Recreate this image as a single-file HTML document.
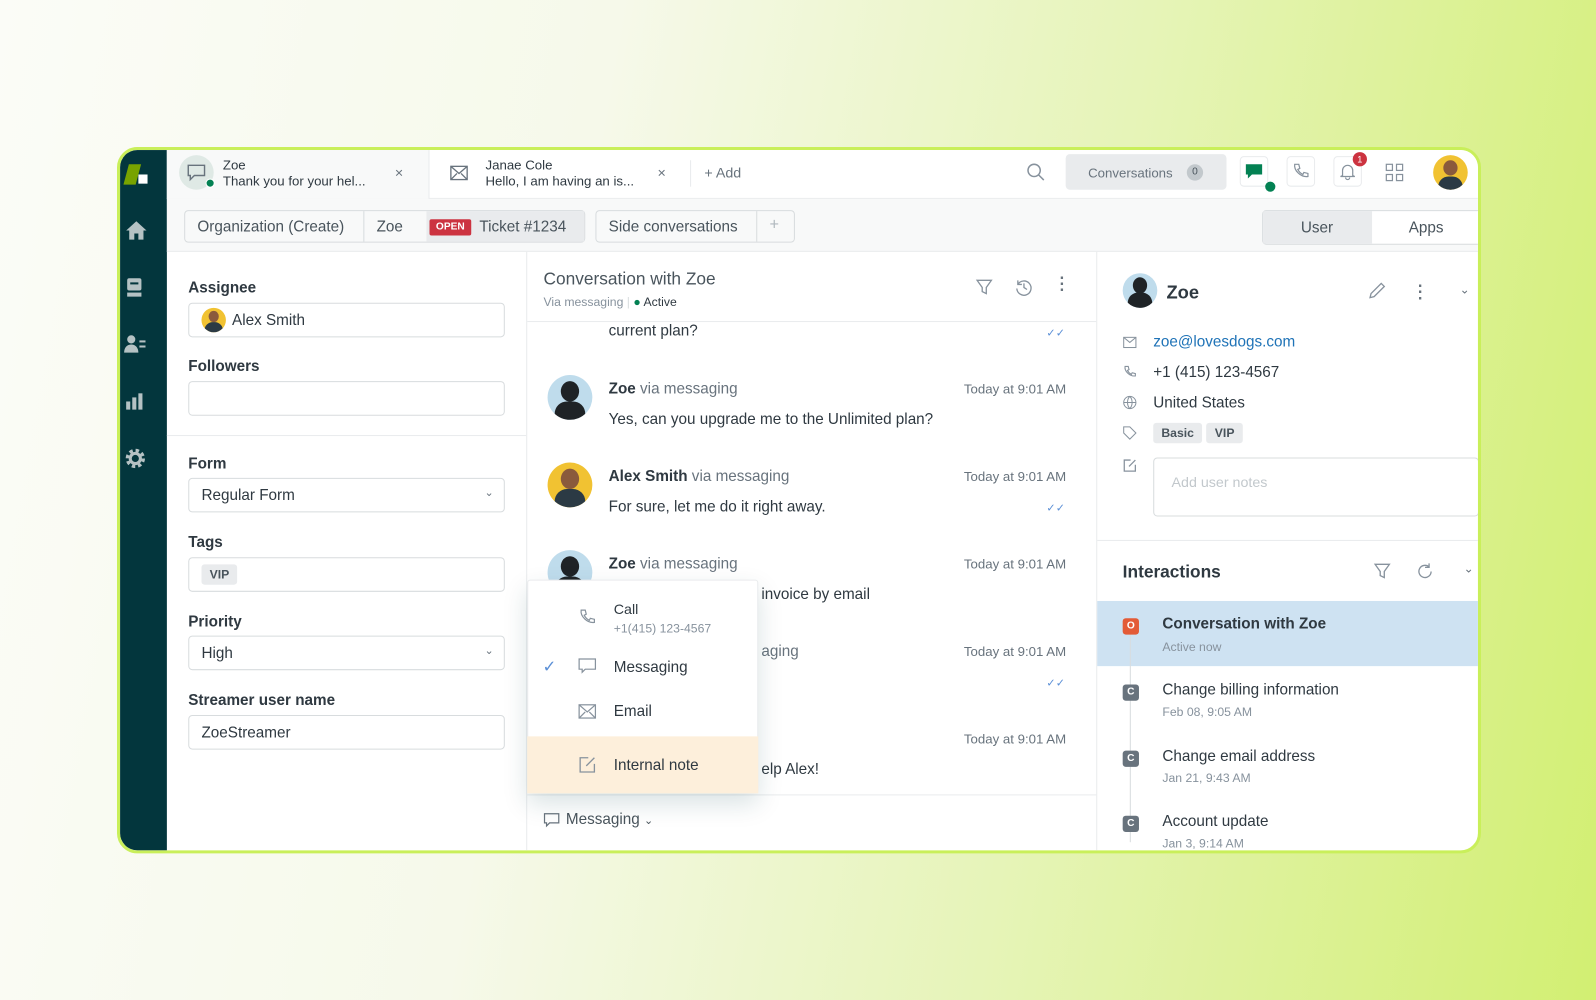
<!DOCTYPE html>
<html><head><meta charset="utf-8">
<style>
*{box-sizing:border-box;margin:0;padding:0}
body{width:1596px;height:1000px;overflow:hidden;font-family:"Liberation Sans",sans-serif;color:#2f3941;
background:linear-gradient(100deg,#fbfcf7 0%,#f6f9ea 35%,#e6f4b8 65%,#d2ef72 100%);position:relative}
.abs{position:absolute}
.frame{position:absolute;left:117px;top:147px;width:1340px;height:694px;border:3px solid #c9ef5a;border-radius:20px;background:#fff;overflow:hidden;transform:scale(1.0179);transform-origin:0 0}
.side{position:absolute;left:0;top:0;width:46px;height:100%;background:#03363d}
.t{position:absolute;white-space:nowrap}
.g{color:#68737d}
.box{position:absolute;border:1px solid #d8dcde;border-radius:4px;background:#fff}
.lbl{position:absolute;font-size:15px;font-weight:bold;color:#2f3941}
.ts{font-size:13px;color:#68737d}
.av{position:absolute;border-radius:50%;overflow:hidden}
.tag{display:inline-block;background:#e9ebed;border-radius:3px;font-size:12px;font-weight:bold;padding:3px 8px;color:#49545c}
</style></head><body>
<div class="frame">
 <div class="side">
  <div class="abs" style="left:6px;top:14px;width:12px;height:20px;background:#78a300;transform:skewX(-15deg)"></div>
  <div class="abs" style="left:18px;top:24px;width:9px;height:9px;background:#fff"></div>
  <svg class="abs" style="left:4px;top:68px" width="24" height="22" viewBox="0 0 24 22"><path d="M12 2L2 11h3v9h5v-6h4v6h5v-9h3z" fill="#b5c2c4"/></svg>
  <svg class="abs" style="left:5px;top:125px" width="18" height="20" viewBox="0 0 18 20"><rect x="2" y="1" width="14" height="12" rx="2" fill="#b5c2c4"/><rect x="2" y="15" width="14" height="4" fill="#b5c2c4"/><rect x="5" y="5" width="8" height="2" fill="#03363d"/></svg>
  <svg class="abs" style="left:3px;top:181px" width="24" height="20" viewBox="0 0 24 20"><circle cx="8" cy="5" r="4" fill="#b5c2c4"/><path d="M1 18c0-5 3-8 7-8s7 3 7 8z" fill="#b5c2c4"/><rect x="16" y="6" width="6" height="2" fill="#b5c2c4"/><rect x="16" y="11" width="6" height="2" fill="#b5c2c4"/></svg>
  <svg class="abs" style="left:5px;top:238px" width="18" height="18" viewBox="0 0 18 18"><rect x="1" y="9" width="4" height="8" fill="#b5c2c4"/><rect x="7" y="5" width="4" height="12" fill="#b5c2c4"/><rect x="13" y="1" width="4" height="16" fill="#b5c2c4"/></svg>
  <svg class="abs" style="left:4px;top:292px" width="22" height="22" viewBox="0 0 22 22"><circle cx="11" cy="11" r="7" fill="none" stroke="#b5c2c4" stroke-width="5" stroke-dasharray="3 2.5"/><circle cx="11" cy="11" r="5" fill="none" stroke="#b5c2c4" stroke-width="3"/></svg>
 </div>
 <div class="abs" style="left:46px;top:0;width:1294px;height:48px;background:#fff;border-bottom:1px solid #e9ebed"></div>
 <div class="abs" style="left:46px;top:0;width:258px;height:48px;background:#f8f9f9;border-right:1px solid #e9ebed"></div>
 <div class="av" style="left:58px;top:5px;width:34px;height:34px;background:#dfe9e5"></div>
 <svg class="abs" style="left:65px;top:13px" width="20" height="18" viewBox="0 0 20 18"><path d="M2 2h16v10H8l-4 4v-4H2z" fill="none" stroke="#68737d" stroke-width="1.4"/></svg>
 <div class="abs" style="left:84px;top:28px;width:9px;height:9px;border-radius:50%;background:#038153;border:1.5px solid #fff"></div>
 <div class="t" style="left:101px;top:7px;font-size:13px;line-height:16px">Zoe<br>Thank you for your hel...</div>
 <div class="t g" style="left:270px;top:14px;font-size:14px">×</div>
 <svg class="abs" style="left:324px;top:15px" width="18" height="15" viewBox="0 0 18 15"><rect x="1" y="1" width="16" height="13" fill="none" stroke="#68737d" stroke-width="1.3"/><path d="M1 1l8 7 8-7M1 14l6-6M17 14l-6-6" fill="none" stroke="#68737d" stroke-width="1.3"/></svg>
 <div class="t" style="left:359px;top:7px;font-size:13px;line-height:16px">Janae Cole<br>Hello, I am having an is...</div>
 <div class="t g" style="left:528px;top:14px;font-size:14px">×</div>
 <div class="abs" style="left:560px;top:10px;width:1px;height:26px;background:#e9ebed"></div>
 <div class="t g" style="left:574px;top:14px;font-size:14px">+ Add</div>
 <svg class="abs" style="left:890px;top:12px" width="20" height="20" viewBox="0 0 20 20"><circle cx="8" cy="8" r="6" fill="none" stroke="#87929d" stroke-width="1.5"/><path d="M12.5 12.5l5 5" stroke="#87929d" stroke-width="1.5"/></svg>
 <div class="abs" style="left:929px;top:4px;width:158px;height:35px;background:#e9ebed;border-radius:4px"></div>
 <div class="t g" style="left:951px;top:15px;font-size:13px">Conversations</div>
 <div class="abs" style="left:1048px;top:14px;width:16px;height:16px;border-radius:50%;background:#c2c8cc;font-size:10px;text-align:center;line-height:16px;color:#49545c">0</div>
 <div class="abs" style="left:1100px;top:6px;width:28px;height:30px;border:1px solid #e9ebed;border-radius:4px"></div>
 <svg class="abs" style="left:1105px;top:13px" width="18" height="16" viewBox="0 0 18 16"><path d="M1 1h16v10H7l-4 4v-4H1z" fill="#038153"/></svg>
 <div class="abs" style="left:1125px;top:31px;width:10px;height:10px;border-radius:50%;background:#038153"></div>
 <div class="abs" style="left:1146px;top:6px;width:28px;height:30px;border:1px solid #e9ebed;border-radius:4px"></div>
 <svg class="abs" style="left:1151px;top:12px" width="18" height="18" viewBox="0 0 18 18"><path d="M4 2l3 0 1 4-2 1c1 2 3 4 5 5l1-2 4 1v3c-7 1-14-6-13-12z" fill="none" stroke="#87929d" stroke-width="1.2"/></svg>
 <div class="abs" style="left:1192px;top:6px;width:28px;height:30px;border:1px solid #e9ebed;border-radius:4px"></div>
 <svg class="abs" style="left:1197px;top:12px" width="18" height="18" viewBox="0 0 18 18"><path d="M4 13V8a5 5 0 0110 0v5l2 1H2zM7 15a2 2 0 004 0" fill="none" stroke="#87929d" stroke-width="1.2"/></svg>
 <div class="abs" style="left:1211px;top:2px;width:14px;height:14px;border-radius:50%;background:#cc3340;color:#fff;font-size:9px;text-align:center;line-height:14px">1</div>
 <svg class="abs" style="left:1243px;top:13px" width="18" height="18" viewBox="0 0 18 18"><g fill="none" stroke="#87929d" stroke-width="1.2"><rect x="1" y="1" width="6" height="6"/><rect x="11" y="1" width="6" height="6"/><rect x="1" y="11" width="6" height="6"/><rect x="11" y="11" width="6" height="6"/></g></svg>
 <div class="av" style="left:1290px;top:5px;width:34px;height:34px;background:#f1c232"><div class="abs" style="left:10px;top:5px;width:14px;height:15px;border-radius:50%;background:#8a5a3c"></div><div class="abs" style="left:5px;top:21px;width:24px;height:16px;border-radius:10px 10px 0 0;background:#2b3a44"></div></div>
 <div class="abs" style="left:46px;top:48px;width:1294px;height:52px;background:#f8f9f9;border-bottom:1px solid #e9ebed"></div>
 <div class="box" style="left:63px;top:59px;width:394px;height:32px;background:#f8f9f9"></div>
 <div class="abs" style="left:301px;top:60px;width:155px;height:30px;background:#e9ebed"></div>
 <div class="abs" style="left:239px;top:60px;width:1px;height:30px;background:#d8dcde"></div>
 <div class="t" style="left:76px;top:67px;font-size:15px;color:#49545c">Organization (Create)</div>
 <div class="t" style="left:252px;top:67px;font-size:15px;color:#49545c">Zoe</div>
 <div class="abs" style="left:304px;top:68px;width:41px;height:16px;background:#cc3340;border-radius:2px;color:#fff;font-size:10px;text-align:center;line-height:16px;font-weight:bold">OPEN</div>
 <div class="t" style="left:353px;top:67px;font-size:15px;color:#49545c">Ticket #1234</div>
 <div class="box" style="left:467px;top:59px;width:196px;height:32px;background:#f8f9f9"></div>
 <div class="abs" style="left:625px;top:60px;width:1px;height:30px;background:#d8dcde"></div>
 <div class="t" style="left:480px;top:67px;font-size:15px;color:#49545c">Side conversations</div>
 <div class="t" style="left:638px;top:65px;font-size:16px;color:#b0b8be">+</div>
 <div class="box" style="left:1122px;top:59px;width:220px;height:34px;background:#fff;border-radius:4px 0 0 4px"></div>
 <div class="abs" style="left:1123px;top:60px;width:107px;height:32px;background:#e9ebed"></div>
 <div class="t" style="left:1160px;top:68px;font-size:15px;color:#49545c">User</div>
 <div class="t" style="left:1266px;top:68px;font-size:15px;color:#49545c">Apps</div>
 <div class="abs" style="left:399px;top:100px;width:1px;height:600px;background:#e9ebed"></div>
 <div class="lbl" style="left:67px;top:127px">Assignee</div>
 <div class="box" style="left:67px;top:150px;width:311px;height:34px"></div>
 <div class="av" style="left:80px;top:155px;width:24px;height:24px;background:#f1c232"><div class="abs" style="left:7px;top:3px;width:10px;height:11px;border-radius:50%;background:#8a5a3c"></div><div class="abs" style="left:3px;top:14px;width:18px;height:12px;border-radius:8px 8px 0 0;background:#2b3a44"></div></div>
 <div class="t" style="left:110px;top:159px;font-size:15px">Alex Smith</div>
 <div class="lbl" style="left:67px;top:204px">Followers</div>
 <div class="box" style="left:67px;top:227px;width:311px;height:34px"></div>
 <div class="abs" style="left:46px;top:280px;width:353px;height:1px;background:#e9ebed"></div>
 <div class="lbl" style="left:67px;top:300px">Form</div>
 <div class="box" style="left:67px;top:322px;width:311px;height:34px"></div>
 <div class="t" style="left:80px;top:331px;font-size:15px">Regular Form</div>
 <div class="t g" style="left:358px;top:330px;font-size:11px">⌄</div>
 <div class="lbl" style="left:67px;top:377px">Tags</div>
 <div class="box" style="left:67px;top:400px;width:311px;height:34px"></div>
 <div class="abs" style="left:80px;top:407px"><span class="tag">VIP</span></div>
 <div class="lbl" style="left:67px;top:455px">Priority</div>
 <div class="box" style="left:67px;top:477px;width:311px;height:34px"></div>
 <div class="t" style="left:80px;top:486px;font-size:15px">High</div>
 <div class="t g" style="left:358px;top:485px;font-size:11px">⌄</div>
 <div class="lbl" style="left:67px;top:532px">Streamer user name</div>
 <div class="box" style="left:67px;top:555px;width:311px;height:34px"></div>
 <div class="t" style="left:80px;top:564px;font-size:15px">ZoeStreamer</div>
 <div class="abs" style="left:959px;top:100px;width:1px;height:600px;background:#e9ebed"></div>
 <div class="t" style="left:416px;top:117px;font-size:17px;color:#49545c">Conversation with Zoe</div>
 <div class="t" style="left:416px;top:142px;font-size:12px;color:#87929d">Via messaging <span style="color:#d8dcde">|</span> <span style="color:#038153">●</span> <span style="color:#2f3941">Active</span></div>
 <svg class="abs" style="left:840px;top:126px" width="18" height="18" viewBox="0 0 18 18"><path d="M2 2h14l-5 7v6l-4-2V9z" fill="none" stroke="#87929d" stroke-width="1.3"/></svg>
 <svg class="abs" style="left:879px;top:126px" width="18" height="18" viewBox="0 0 18 18"><path d="M3 6a7 7 0 11-1 4M3 2v4h4M9 5v4l3 2" fill="none" stroke="#87929d" stroke-width="1.3"/></svg>
 <div class="t g" style="left:923px;top:124px;font-size:16px;font-weight:bold;line-height:6px">·<br>·<br>·</div>
 <div class="abs" style="left:400px;top:168px;width:559px;height:1px;background:#e9ebed"></div>
 <div class="t" style="left:480px;top:169px;font-size:15px">current plan?</div>
 <div class="t" style="left:910px;top:173px;font-size:11px;color:#5b8fd6">✓✓</div>
 <div class="av" style="left:420px;top:221px;width:44px;height:44px;background:#bfdcec"><div class="abs" style="left:13px;top:6px;width:18px;height:20px;border-radius:50%;background:#1f2326"></div><div class="abs" style="left:7px;top:26px;width:30px;height:20px;border-radius:12px 12px 0 0;background:#1f2326"></div></div>
 <div class="t" style="left:480px;top:226px;font-size:15px"><b>Zoe</b> <span class="g">via messaging</span></div>
 <div class="t ts" style="left:829px;top:227px">Today at 9:01 AM</div>
 <div class="t" style="left:480px;top:256px;font-size:15px">Yes, can you upgrade me to the Unlimited plan?</div>
 <div class="av" style="left:420px;top:307px;width:44px;height:44px;background:#f1c232"><div class="abs" style="left:13px;top:6px;width:18px;height:20px;border-radius:50%;background:#8a5a3c"></div><div class="abs" style="left:7px;top:26px;width:30px;height:20px;border-radius:12px 12px 0 0;background:#2b3a44"></div></div>
 <div class="t" style="left:480px;top:312px;font-size:15px"><b>Alex Smith</b> <span class="g">via messaging</span></div>
 <div class="t ts" style="left:829px;top:313px">Today at 9:01 AM</div>
 <div class="t" style="left:480px;top:342px;font-size:15px">For sure, let me do it right away.</div>
 <div class="t" style="left:910px;top:345px;font-size:11px;color:#5b8fd6">✓✓</div>
 <div class="av" style="left:420px;top:393px;width:44px;height:44px;background:#bfdcec"><div class="abs" style="left:13px;top:6px;width:18px;height:20px;border-radius:50%;background:#1f2326"></div><div class="abs" style="left:7px;top:26px;width:30px;height:20px;border-radius:12px 12px 0 0;background:#1f2326"></div></div>
 <div class="t" style="left:480px;top:398px;font-size:15px"><b>Zoe</b> <span class="g">via messaging</span></div>
 <div class="t ts" style="left:829px;top:399px">Today at 9:01 AM</div>
 <div class="t" style="left:630px;top:428px;font-size:15px">invoice by email</div>
 <div class="t" style="left:630px;top:484px;font-size:15px;color:#68737d">aging</div>
 <div class="t ts" style="left:829px;top:485px">Today at 9:01 AM</div>
 <div class="t" style="left:910px;top:517px;font-size:11px;color:#5b8fd6">✓✓</div>
 <div class="t ts" style="left:829px;top:571px">Today at 9:01 AM</div>
 <div class="t" style="left:630px;top:600px;font-size:15px">elp Alex!</div>
 <div class="abs" style="left:400px;top:633px;width:559px;height:1px;background:#e9ebed"></div>
 <svg class="abs" style="left:416px;top:651px" width="16" height="15" viewBox="0 0 16 15"><path d="M1 1h14v9H6l-3 3v-3H1z" fill="none" stroke="#68737d" stroke-width="1.2"/></svg>
 <div class="t" style="left:438px;top:649px;font-size:15px;color:#49545c">Messaging <span style="font-size:11px">⌄</span></div>
 <div class="abs" style="left:400px;top:422px;width:227px;height:210px;background:#fff;border:1px solid #e9ebed;border-radius:3px;box-shadow:0 10px 24px rgba(4,68,77,.15)"></div>
 <div class="abs" style="left:400px;top:576px;width:227px;height:56px;background:#fdefdb"></div>
 <svg class="abs" style="left:450px;top:450px" width="18" height="18" viewBox="0 0 18 18"><path d="M4 2l3 0 1 4-2 1c1 2 3 4 5 5l1-2 4 1v3c-7 1-14-6-13-12z" fill="none" stroke="#87929d" stroke-width="1.2"/></svg>
 <div class="t" style="left:485px;top:442px;font-size:14px;line-height:18px">Call<br><span style="font-size:12px;color:#87929d">+1(415) 123-4567</span></div>
 <div class="t" style="left:415px;top:498px;font-size:16px;color:#5b8fd6">✓</div>
 <svg class="abs" style="left:450px;top:499px" width="18" height="17" viewBox="0 0 18 17"><path d="M1 1h16v10H7l-3 3v-3H1z" fill="none" stroke="#87929d" stroke-width="1.2"/></svg>
 <div class="t" style="left:485px;top:500px;font-size:15px">Messaging</div>
 <svg class="abs" style="left:450px;top:544px" width="18" height="15" viewBox="0 0 18 15"><rect x="1" y="1" width="16" height="13" fill="none" stroke="#87929d" stroke-width="1.2"/><path d="M1 1l8 7 8-7M1 14l6-6M17 14l-6-6" fill="none" stroke="#87929d" stroke-width="1.2"/></svg>
 <div class="t" style="left:485px;top:543px;font-size:15px">Email</div>
 <svg class="abs" style="left:450px;top:595px" width="18" height="18" viewBox="0 0 18 18"><path d="M10 2H2v14h14V8M8 10l8-8" fill="none" stroke="#87929d" stroke-width="1.3"/></svg>
 <div class="t" style="left:485px;top:596px;font-size:15px">Internal note</div>
 <div class="av" style="left:985px;top:121px;width:34px;height:34px;background:#bfdcec"><div class="abs" style="left:10px;top:4px;width:14px;height:16px;border-radius:50%;background:#1f2326"></div><div class="abs" style="left:5px;top:19px;width:24px;height:16px;border-radius:10px 10px 0 0;background:#1f2326"></div></div>
 <div class="t" style="left:1028px;top:130px;font-size:18px;font-weight:bold;color:#2f3941">Zoe</div>
 <svg class="abs" style="left:1225px;top:128px" width="20" height="20" viewBox="0 0 20 20"><path d="M3 17l1-4 10-10 3 3-10 10z" fill="none" stroke="#87929d" stroke-width="1.3"/></svg>
 <div class="t g" style="left:1275px;top:132px;font-size:16px;font-weight:bold;line-height:6px">·<br>·<br>·</div>
 <div class="t g" style="left:1316px;top:130px;font-size:12px">⌄</div>
 <svg class="abs" style="left:985px;top:183px" width="14" height="12" viewBox="0 0 14 12"><rect x="1" y="1" width="12" height="10" fill="none" stroke="#87929d"/><path d="M1 1l6 5 6-5" fill="none" stroke="#87929d"/></svg>
 <div class="t" style="left:1015px;top:180px;font-size:15px;color:#1f73b7">zoe@lovesdogs.com</div>
 <svg class="abs" style="left:985px;top:211px" width="14" height="14" viewBox="0 0 18 18"><path d="M4 2l3 0 1 4-2 1c1 2 3 4 5 5l1-2 4 1v3c-7 1-14-6-13-12z" fill="none" stroke="#87929d" stroke-width="1.4"/></svg>
 <div class="t" style="left:1015px;top:210px;font-size:15px">+1 (415) 123-4567</div>
 <svg class="abs" style="left:985px;top:241px" width="14" height="14" viewBox="0 0 14 14"><circle cx="7" cy="7" r="6" fill="none" stroke="#87929d"/><path d="M1 7h12M7 1c-3 3-3 9 0 12M7 1c3 3 3 9 0 12" fill="none" stroke="#87929d"/></svg>
 <div class="t" style="left:1015px;top:240px;font-size:15px">United States</div>
 <svg class="abs" style="left:985px;top:271px" width="14" height="14" viewBox="0 0 14 14"><path d="M1 1h6l6 6-6 6-6-6z" fill="none" stroke="#87929d"/></svg>
 <div class="abs" style="left:1015px;top:268px"><span class="tag">Basic</span> <span class="tag">VIP</span></div>
 <svg class="abs" style="left:985px;top:303px" width="14" height="14" viewBox="0 0 18 18"><path d="M10 2H2v14h14V8M8 10l8-8" fill="none" stroke="#87929d" stroke-width="1.6"/></svg>
 <div class="box" style="left:1015px;top:302px;width:320px;height:58px"></div>
 <div class="t" style="left:1033px;top:318px;font-size:14px;color:#c2c8cc">Add user notes</div>
 <div class="abs" style="left:960px;top:383px;width:380px;height:1px;background:#e9ebed"></div>
 <div class="t" style="left:985px;top:405px;font-size:17px;font-weight:bold;color:#2f3941">Interactions</div>
 <svg class="abs" style="left:1231px;top:405px" width="18" height="18" viewBox="0 0 18 18"><path d="M2 2h14l-5 7v6l-4-2V9z" fill="none" stroke="#87929d" stroke-width="1.3"/></svg>
 <svg class="abs" style="left:1273px;top:405px" width="18" height="18" viewBox="0 0 18 18"><path d="M15 9a6 6 0 11-2-4.5M13 1v4h-4" fill="none" stroke="#87929d" stroke-width="1.3"/></svg>
 <div class="t g" style="left:1320px;top:404px;font-size:12px">⌄</div>
 <div class="abs" style="left:960px;top:443px;width:380px;height:64px;background:#cee2f2"></div>
 <div class="abs" style="left:992px;top:470px;width:1px;height:210px;background:#d8dcde"></div>
 <div class="abs" style="left:985px;top:460px;width:16px;height:16px;border-radius:3px;background:#e35b37;color:#fff;font-size:10px;text-align:center;line-height:16px;font-weight:bold">O</div>
 <div class="t" style="left:1024px;top:457px;font-size:15px;font-weight:bold;color:#2f3941">Conversation with Zoe</div>
 <div class="t" style="left:1024px;top:481px;font-size:12px;color:#87929d">Active now</div>
 <div class="abs" style="left:985px;top:525px;width:16px;height:16px;border-radius:3px;background:#68737d;color:#fff;font-size:10px;text-align:center;line-height:16px;font-weight:bold">C</div>
 <div class="t" style="left:1024px;top:522px;font-size:15px">Change billing information</div>
 <div class="t" style="left:1024px;top:545px;font-size:12px;color:#87929d">Feb 08, 9:05 AM</div>
 <div class="abs" style="left:985px;top:590px;width:16px;height:16px;border-radius:3px;background:#68737d;color:#fff;font-size:10px;text-align:center;line-height:16px;font-weight:bold">C</div>
 <div class="t" style="left:1024px;top:587px;font-size:15px">Change email address</div>
 <div class="t" style="left:1024px;top:610px;font-size:12px;color:#87929d">Jan 21, 9:43 AM</div>
 <div class="abs" style="left:985px;top:654px;width:16px;height:16px;border-radius:3px;background:#68737d;color:#fff;font-size:10px;text-align:center;line-height:16px;font-weight:bold">C</div>
 <div class="t" style="left:1024px;top:651px;font-size:15px">Account update</div>
 <div class="t" style="left:1024px;top:674px;font-size:12px;color:#87929d">Jan 3, 9:14 AM</div>
</div>
</body></html>
